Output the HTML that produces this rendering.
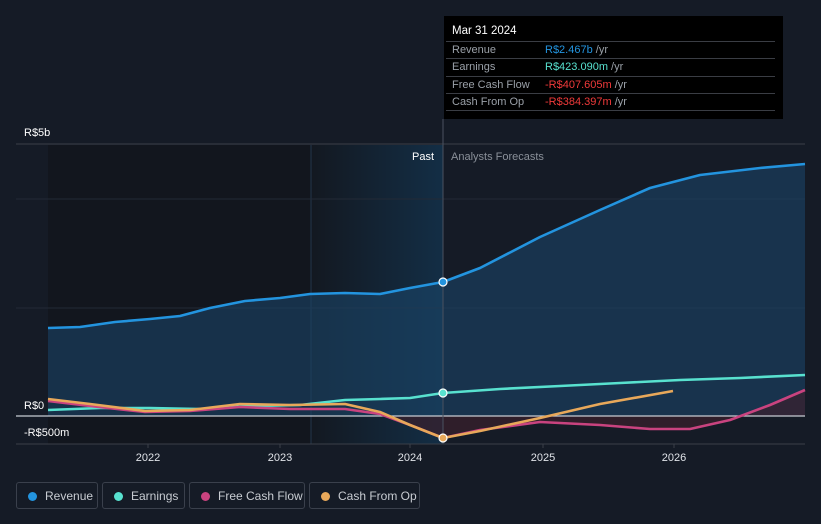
<!DOCTYPE html>
<html><head><style>
body{margin:0;width:821px;height:524px;background:#151b26;font-family:"Liberation Sans",sans-serif;overflow:hidden;position:relative}
.tt{position:absolute;left:444px;top:16px;width:339px;height:103px;background:#000;color:#fff;font-size:11px}
.tt .h{position:absolute;left:8px;top:9px;font-size:11.5px}
.row{position:absolute;left:2px;width:329px;border-top:1px solid #3a3d44;height:17px;line-height:17px}
.row span{position:absolute;left:6px;color:#9aa0a8}
.row b{position:absolute;left:99px;font-weight:normal}
.leg{position:absolute;top:482px;height:27px;border:1px solid #3a404c;border-radius:3px;color:#c8ccd2;font-size:12px;line-height:27px;box-sizing:border-box}
.leg i{position:absolute;left:11px;top:9px;width:9px;height:9px;border-radius:50%}
.leg span{position:absolute;left:28px}
</style></head><body>
<svg width="821" height="524" style="position:absolute;left:0;top:0">
<defs>
<linearGradient id="pg" x1="0" x2="1"><stop offset="0" stop-color="#131820"/><stop offset="1" stop-color="#133049"/></linearGradient>
</defs>
<rect x="48" y="145" width="263" height="299" fill="#12161e"/>
<rect x="311" y="145" width="132" height="299" fill="url(#pg)" opacity="0.9"/>
<line x1="311" y1="145" x2="311" y2="444" stroke="#22354a"/>
<line x1="16" y1="144" x2="805" y2="144" stroke="#3a3f48"/>
<line x1="16" y1="199" x2="805" y2="199" stroke="#232a36"/>
<line x1="16" y1="308" x2="805" y2="308" stroke="#232a36"/>
<path d="M48,328 L80,327 L115,322 L150,319 L180,316 L210,308 L245,301 L280,298 L310,294 L345,293 L380,294 L410,288 L443,282 L480,268 L540,237 L600,210 L650,188 L700,175 L760,168 L805,164 L805,416 L48,416Z" fill="#1a4467" opacity="0.6"/>
<path d="M380,414 L410,425 L443,438 L480,430 L540,422 L600,425 L650,429 L690,429 L730,420 L770,405 L805,390 L805,416 L380,416Z" fill="#3b1f2c" opacity="0.7"/>
<line x1="16" y1="416" x2="805" y2="416" stroke="#c8ccd2" stroke-width="1.2"/>
<line x1="16" y1="444" x2="805" y2="444" stroke="#3a3f48"/>
<line x1="443" y1="119" x2="443" y2="444" stroke="#4a5260"/>
<g fill="none" stroke-width="2.6" stroke-linejoin="round">
<path d="M48,328 L80,327 L115,322 L150,319 L180,316 L210,308 L245,301 L280,298 L310,294 L345,293 L380,294 L410,288 L443,282 L480,268 L540,237 L600,210 L650,188 L700,175 L760,168 L805,164" stroke="#2394df"/>
<path d="M48,410 L100,408 L150,408 L200,409 L250,406 L300,405 L345,400 L380,399 L410,398 L443,393 L500,389 L560,386 L620,383 L680,380 L740,378 L805,375" stroke="#58e1cf"/>
<path d="M48,401 L90,406 L145,412 L190,411 L240,407 L290,409 L345,409 L380,414 L410,425 L443,438 L480,430 L540,422 L600,425 L650,429 L690,429 L730,420 L770,405 L805,390" stroke="#c9437f"/>
<path d="M48,399 L90,404 L145,411 L190,410 L240,404 L290,405 L345,404 L380,412 L410,425 L443,438 L480,431 L540,418 L600,404 L673,391" stroke="#e8a85a"/>
</g>
<circle cx="443" cy="282" r="4" fill="#2394df" stroke="#fff" stroke-width="1.2"/>
<circle cx="443" cy="393" r="4" fill="#58e1cf" stroke="#fff" stroke-width="1.2"/>
<circle cx="443" cy="438" r="4" fill="#e8a85a" stroke="#fff" stroke-width="1.2"/>
<g font-size="11" fill="#fff">
<text x="24" y="136">R$5b</text>
<text x="24" y="409">R$0</text>
<text x="24" y="436">-R$500m</text>
<text x="412" y="160">Past</text>
<text x="451" y="160" fill="#8a9099">Analysts Forecasts</text>
</g>
<g font-size="11" fill="#e0e3e8" text-anchor="middle">
<text x="148" y="461">2022</text><text x="280" y="461">2023</text><text x="410" y="461">2024</text><text x="543" y="461">2025</text><text x="674" y="461">2026</text>
</g>
<g stroke="#3a3f48"><line x1="148" y1="444" x2="148" y2="448"/><line x1="280" y1="444" x2="280" y2="448"/><line x1="410" y1="444" x2="410" y2="448"/><line x1="543" y1="444" x2="543" y2="448"/><line x1="674" y1="444" x2="674" y2="448"/></g>
</svg>
<div class="tt">
<div class="h">Mar 31 2024</div>
<div class="row" style="top:25px"><span>Revenue</span><b style="color:#2394df">R$2.467b <span style="position:static;color:#9aa0a8">/yr</span></b></div>
<div class="row" style="top:42px"><span>Earnings</span><b style="color:#58e1cf">R$423.090m <span style="position:static;color:#9aa0a8">/yr</span></b></div>
<div class="row" style="top:60px"><span>Free Cash Flow</span><b style="color:#f03a3a">-R$407.605m <span style="position:static;color:#9aa0a8">/yr</span></b></div>
<div class="row" style="top:77px"><span>Cash From Op</span><b style="color:#f03a3a">-R$384.397m <span style="position:static;color:#9aa0a8">/yr</span></b></div>
<div class="row" style="top:94px;height:0"></div>
</div>
<div class="leg" style="left:16px;width:82px"><i style="background:#2394df"></i><span>Revenue</span></div>
<div class="leg" style="left:102px;width:83px"><i style="background:#58e1cf"></i><span>Earnings</span></div>
<div class="leg" style="left:189px;width:116px"><i style="background:#c9437f"></i><span>Free Cash Flow</span></div>
<div class="leg" style="left:309px;width:111px"><i style="background:#e8a85a"></i><span>Cash From Op</span></div>
</body></html>
